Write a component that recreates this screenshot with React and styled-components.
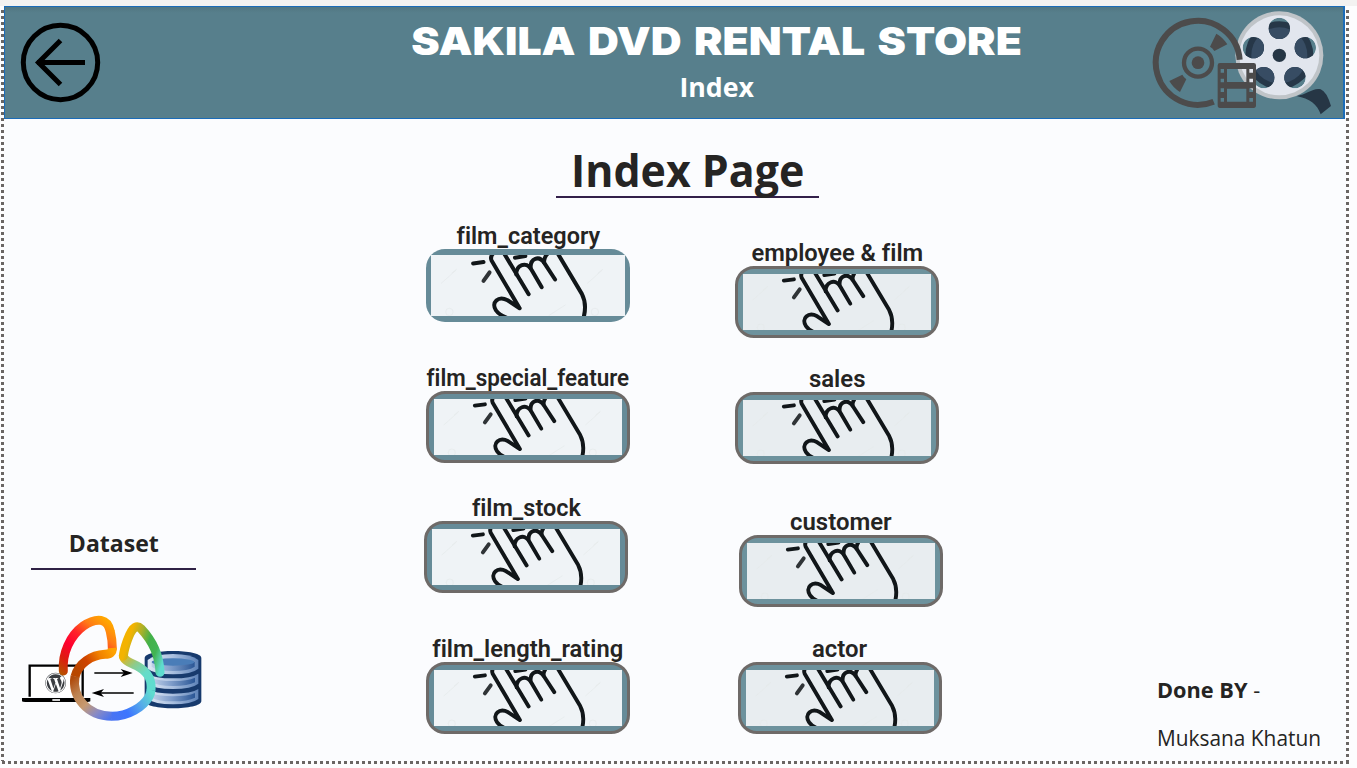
import React from 'react';
import styled, { createGlobalStyle } from 'styled-components';
import { FaWordpress } from 'react-icons/fa';

const GlobalStyle = createGlobalStyle`
  * { box-sizing: border-box; }
  body { margin: 0; background: #fdfdfe; overflow: hidden; }
  svg { display: block; }
`;

const ui = "'Open Sans', 'Noto Sans', sans-serif";
const din = "Roboto, 'Liberation Sans', sans-serif";

const Page = styled.div`
  width: 1357px;
  height: 768px;
  display: flex;
  flex-direction: column;
  color: #252423;
  font-family: ${ui};
`;

const TopStrip = styled.div`
  height: 6px;
  background: #f3f2f1;
  flex: none;
`;

const Frame = styled.div`
  display: grid;
  grid-template-columns: 3px 1342px 3px;
  grid-template-rows: 755px 3px;
  margin-left: 1px;
`;

const SideDots = styled.div`
  background: repeating-linear-gradient(to bottom, #6a6664 0 3px, transparent 3px 6px);
  margin-top: 4px;
`;

const BottomDots = styled.div`
  grid-column: 1 / -1;
  background: repeating-linear-gradient(to right, #6a6664 0 3px, transparent 3px 6px);
  margin-left: 1px;
`;

const Canvas = styled.main`
  background: #fbfcfe;
  display: flex;
  flex-direction: column;
`;

const Header = styled.header`
  width: 1341px;
  height: 113px;
  flex: none;
  border: 1px solid #1b6cb8;
  border-right-width: 2px;
  background: linear-gradient(#517682, #577f8c 6px);
  display: flex;
  align-items: flex-start;
  justify-content: space-between;
  padding: 3px 8px 0 15px;
`;

const BackButton = styled.button`
  border: 0;
  padding: 0;
  margin-top: 12px;
  background: none;
`;

const Titles = styled.div`
  display: flex;
  flex-direction: column;
  align-items: center;
  color: #fff;
  padding-left: 182px;
`;

const Title = styled.h1`
  margin: 7px 0 0;
  font: 900 39px/48px Inter, sans-serif;
  word-spacing: 3.5px;
  white-space: nowrap;
  transform: scaleX(${(p) => p.$stretch});
`;

const Subtitle = styled.h2`
  margin: 2px 0 0;
  font: 700 27px/40px ${ui};
  transform: scaleX(${(p) => p.$stretch});
`;

const Body = styled.section`
  flex: 1;
  display: flex;
`;

const Side = styled.aside`
  width: 398px;
  flex: none;
  padding: 404px 0 0 16px;
`;

const DatasetTitle = styled.h3`
  width: 165px;
  height: 47px;
  margin: 0 0 42px 11px;
  border-bottom: 2px solid #2f2145;
  text-align: center;
  font: 700 24px/40px ${ui};
`;

const Center = styled.section`
  width: 571px;
  flex: none;
`;

const Heading = styled.h2`
  width: 263px;
  height: 79px;
  margin: 0 0 0 154px;
  padding-top: 21px;
  border-bottom: 2px solid #33204a;
  text-align: center;
  white-space: nowrap;
  font: 700 44px/60px ${ui};
`;

const Fit = styled.span`
  display: inline-block;
  transform: scaleX(${(p) => p.$stretch});
  transform-origin: ${(p) => p.$origin || 'center'};
`;

const Columns = styled.div`
  display: flex;
  gap: 105px;
  padding-left: 24px;
`;

const Column = styled.div`
  width: 204px;
  display: flex;
  flex-direction: column;
`;

const NavItem = styled.div`
  margin: ${(p) => p.$gap}px 0 0 ${(p) => p.$shift || 0}px;
  width: 204px;
`;

const Label = styled.div`
  height: 28px;
  display: flex;
  justify-content: center;
  white-space: nowrap;
  font: 600 23px/31px ${din};
  font-variant-ligatures: none;
`;

const Underscore = styled.span`
  display: inline-block;
  transform: translateY(2px);
`;

const Tile = styled.div`
  height: ${(p) => (p.$plain ? 73 : 72)}px;
  border-radius: 19px;
  border: ${(p) => (p.$plain ? 0 : '3px solid #6e6a68')};
  background: ${(p) => (p.$tone === 'cool' ? '#6d929d' : '#668b98')};
  padding: ${(p) => (p.$plain ? '6px 5px' : '5px')};
  overflow: hidden;
`;

const Picture = styled.div`
  height: ${(p) => (p.$plain ? 61 : 56)}px;
  background: ${(p) => (p.$tone === 'cool' ? '#e8edf0' : '#eff3f6')};
`;

const Credits = styled.aside`
  padding: 551px 0 0 184px;
  white-space: nowrap;
`;

const CreditTitle = styled.div`
  font: 700 21px/40px ${ui};
`;

const Dash = styled.span`
  font-weight: 500;
`;

const CreditName = styled.div`
  margin-top: 8px;
  font: 400 21.5px/40px ${ui};
`;

function BackIcon() {
  return (
    <svg width="82" height="82" viewBox="0 0 82 82" fill="none" stroke="#000" strokeWidth="5">
      <circle cx="40.5" cy="40.5" r="37.2" />
      <path d="M40.5 18.5 18.5 40.5 40.5 62.5M17 40.5H65" />
    </svg>
  );
}

const reelHoles = [
  [418, 85],
  [496, 143],
  [465, 233],
  [371, 233],
  [340, 143],
];

function HeaderArt() {
  return (
    <svg width="185" height="106" viewBox="30 30 555 318">
      <path d="M470 288C500 284 520 262 542 268Q560 275 573 318L542 343C532 312 508 296 470 288Z" fill="#263645" />
      <circle cx="418" cy="166" r="132" fill="#bfc4c8" />
      <circle cx="418" cy="166" r="120" fill="#e2e6ee" />
      {reelHoles.map(([x, y], i) => (
        <g key={i}>
          <clipPath id={`hole${i}`}><circle cx={x} cy={y} r="32" /></clipPath>
          <g clipPath={`url(#hole${i})`}>
            <circle cx={x} cy={y} r="32" fill="#577f8c" />
            <circle cx="418" cy="166" r="102" fill="#263748" />
            <circle cx="418" cy="166" r="84" fill="#374c63" />
          </g>
        </g>
      ))}
      <circle cx="418" cy="166" r="20" fill="#263645" />
      <g fill="none" stroke="#4c4b4b">
        <path d="M221 305A126 126 0 1 1 299 179" strokeWidth="18" />
        <circle cx="174" cy="188" r="42" strokeWidth="13" />
      </g>
      <g fill="#4c4b4b">
        <circle cx="174" cy="188" r="19" />
        <path d="M229 101Q250 113 262 133L223 153Q218 144 210 140Z" />
        <path d="M88 243 127 224Q132 233 139 238L120 276Q100 264 88 243Z" />
        <path
          fillRule="evenodd"
          d="M240 189H341Q348 189 348 196V316Q348 324 341 324H240Q233 324 233 316V196Q233 189 240 189ZM261 207V246H319V207ZM261 266V305H319V266ZM242 207V218H252V207ZM242 236V247H252V236ZM242 265V276H252V265ZM242 294V305H252V294ZM328 207V218H339V207ZM328 236V247H339V236ZM328 265V276H339V265ZM328 294V305H339V294Z"
        />
      </g>
    </svg>
  );
}

function HandIcon() {
  return (
    <svg width="100%" height="100%" viewBox="63 105 580 184" preserveAspectRatio="xMidYMid slice">
      <g stroke="#e4e9ea" strokeWidth="2" fill="none">
        <path d="M93 191 138 151M530 191 575 151M415 287 465 255M125 160 140 148M562 160 577 148" />
        <circle cx="118" cy="276" r="11" />
        <circle cx="553" cy="276" r="11" />
      </g>
      <g fill="none" stroke="#111619" strokeWidth="12" strokeLinecap="round" strokeLinejoin="round">
        <path d="M189 131 220 127M314 114 345 109" />
        <path d="M220 183 238 158" stroke="#303437" />
        <path d="M256 95Q238 108 244 122L328 265 292 241C264 226 242 248 257 271Q265 283 288 293" />
        <path d="M279 97 355 223" />
        <path d="M318 164C317 137 348 122 363 149L394 202" />
        <path d="M361 145C359 116 386 105 402 130L434 179" />
        <path d="M401 128Q401 109 416 98" />
        <path d="M440 98 514 222Q530 253 519 294" />
      </g>
    </svg>
  );
}

const ribbon = [
  { d: 'M190 213C186 160 210 107 250 78C270 64 290 59 303 61Q325 65 331 95Q337 120 337 145', g: [190, 228, 325, 65], s: ['#b55400', '#dd1c10', '#ff0030', '#ff2529', '#ff7a16', '#ffa600'] },
  { d: 'M337 144Q338 163 315 163C275 165 235 190 225 230', g: [337, 150, 232, 215], s: ['#ffa300', '#f08000', '#cf4300', '#b84700'] },
  { d: 'M225 229C215 290 260 348 336 349', g: [224, 230, 338, 350], s: ['#b04b0c', '#bd814f', '#c79a70', '#8a8bc4', '#4a74f0'] },
  { d: 'M335 349C385 349 430 320 447 290Q452 281 453 270', g: [335, 350, 452, 275], s: ['#4a74f2', '#3d75ff', '#55a9ea', '#5fdccf'] },
  { d: 'M453 271C456 240 446 220 420 203C400 190 370 185 370 166', g: [450, 260, 370, 170], s: ['#5fdccf', '#66dcc8', '#8dcb8c', '#e2b51c'] },
  { d: 'M370 168C372 148 388 92 405 82Q414 77 423 86C455 120 478 160 480 217', g: [370, 168, 482, 205], s: ['#f3b300', '#a9b02a', '#43b149', '#42b454', '#5fdccf'] },
];

function DatasetArt() {
  return (
    <svg width="185" height="112" viewBox="60 36 555 336">
      <defs>
        {ribbon.map(({ g, s }, i) => (
          <linearGradient key={i} id={`rib${i}`} gradientUnits="userSpaceOnUse" x1={g[0]} y1={g[1]} x2={g[2]} y2={g[3]}>
            {s.map((c, j) => <stop key={j} offset={j / (s.length - 1)} stopColor={c} />)}
          </linearGradient>
        ))}
        <linearGradient id="rim">
          <stop offset="0" stopColor="#dfe8f5" />
          <stop offset=".5" stopColor="#a9bfdf" />
          <stop offset="1" stopColor="#5e83b8" />
        </linearGradient>
        <linearGradient id="disk">
          <stop offset="0" stopColor="#c0d0e8" />
          <stop offset=".45" stopColor="#7f9dca" />
          <stop offset="1" stopColor="#2a5695" />
        </linearGradient>
      </defs>
      <path d="M89 290V197H248V290" fill="#fff" stroke="#000" strokeWidth="7" />
      <path d="M66 294H271V304Q268 306 262 306H76Q67 306 66 304Z" />
      <path d="M157 300H180" stroke="#fff" strokeWidth="5" />
      <FaWordpress x="135" y="217" size="64" color="#3b3e42" />
      <path d="M283 219H372M401 279H300" stroke="#000" strokeWidth="4" />
      <path d="M398 219 362 207 372 219 362 231ZM275 279 312 267 302 279 312 291Z" />
      <path d="M434 174C434 146 604 146 604 174V303C604 332 434 332 434 303Z" fill="#173a6d" />
      <path d="M443 180Q463 162 519 162T595 180V206Q575 223 519 223T443 206Z" fill="url(#rim)" />
      <path d="M455 186H584V200Q565 213 519 213T455 200Z" fill="url(#disk)" />
      <ellipse cx="519" cy="186" rx="64" ry="11" fill="#4a7db8" />
      {[0, 46].map((y) => (
        <g key={y} transform={`translate(0 ${y})`}>
          <path d="M443 221Q463 235 519 235T595 221V251Q575 267 519 267T443 251Z" fill="url(#rim)" />
          <path d="M455 233Q475 243 519 243T585 233V247Q565 258 519 258T455 247Z" fill="url(#disk)" />
        </g>
      ))}
      <g fill="none" strokeWidth="27">
        {ribbon.map(({ d }, i) => (
          <path key={i} d={d} stroke={`url(#rib${i})`} strokeLinecap={i === 0 || i === 5 ? 'round' : 'butt'} />
        ))}
      </g>
    </svg>
  );
}

function Nav({ label, stretch = 1, gap, shift, tone, plain }) {
  return (
    <NavItem $gap={gap} $shift={shift}>
      <Label>
        <Fit $stretch={stretch}>
          {label.split(/(_)/).map((part, i) => (part === '_' ? <Underscore key={i}>_</Underscore> : part))}
        </Fit>
      </Label>
      <Tile $tone={tone} $plain={plain}>
        <Picture $tone={tone} $plain={plain}><HandIcon /></Picture>
      </Tile>
    </NavItem>
  );
}

export default function App() {
  return (
    <Page>
      <GlobalStyle />
      <TopStrip />
      <Frame>
        <SideDots />
        <Canvas>
          <Header>
            <BackButton aria-label="Back"><BackIcon /></BackButton>
            <Titles>
              <Title $stretch={1.096}>SAKILA DVD RENTAL STORE</Title>
              <Subtitle $stretch={0.99}>Index</Subtitle>
            </Titles>
            <HeaderArt />
          </Header>
          <Body>
            <Side>
              <DatasetTitle><Fit $stretch={0.96}>Dataset</Fit></DatasetTitle>
              <DatasetArt />
            </Side>
            <Center>
              <Heading><Fit $stretch={0.975}>Index Page</Fit></Heading>
              <Columns>
                <Column>
                  <Nav label="film_category" stretch={1.02} gap={23} plain />
                  <Nav label="film_special_feature" stretch={0.975} gap={41} />
                  <Nav label="film_stock" stretch={1.02} gap={30} shift={-2} />
                  <Nav label="film_length_rating" stretch={1.03} gap={41} />
                </Column>
                <Column>
                  <Nav label="employee & film" stretch={1.03} gap={40} tone="cool" />
                  <Nav label="sales" stretch={1.04} gap={26} tone="cool" />
                  <Nav label="customer" stretch={1.04} gap={43} shift={4} tone="cool" />
                  <Nav label="actor" stretch={1.04} gap={27} shift={3} tone="cool" />
                </Column>
              </Columns>
            </Center>
            <Credits>
              <CreditTitle><Fit $stretch={1.035} $origin="left">Done BY <Dash>-</Dash></Fit></CreditTitle>
              <CreditName><Fit $stretch={0.97} $origin="left">Muksana Khatun</Fit></CreditName>
            </Credits>
          </Body>
        </Canvas>
        <SideDots />
        <BottomDots />
      </Frame>
    </Page>
  );
}
